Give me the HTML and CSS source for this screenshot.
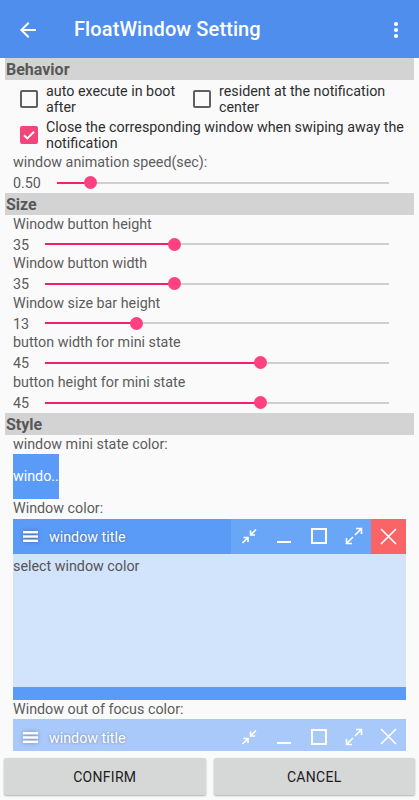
FILE: index.html
```html
<!DOCTYPE html>
<html lang="en">
<head>
<meta charset="utf-8">
<title>FloatWindow Setting</title>
<link rel="stylesheet" href="styles.css">
</head>
<body>
<div class="app">
  <header class="appbar">
    <svg class="back" viewBox="0 0 24 24" width="24" height="24"><path d="M20 11H7.83l5.59-5.59L12 4l-8 8 8 8 1.41-1.41L7.83 13H20v-2z" fill="#fff"/></svg>
    <h1 class="title">FloatWindow Setting</h1>
    <svg class="kebab" viewBox="0 0 6 18" width="6" height="18"><circle cx="3" cy="3" r="2.1" fill="#fff"/><circle cx="3" cy="9" r="2.1" fill="#fff"/><circle cx="3" cy="15" r="2.1" fill="#fff"/></svg>
  </header>

  <main class="content">
    <div class="section-head">Behavior</div>
    <div class="checks">
      <div class="check-pair">
        <div class="check"><span class="box"></span><span class="check-text">auto execute in boot after</span></div>
        <div class="check"><span class="box"></span><span class="check-text">resident at the notification center</span></div>
      </div>
      <div class="check">
        <span class="box checked"><svg viewBox="0 0 18 18" width="18" height="18"><path d="M4 9.2l3.3 3.2L14 5.8" fill="none" stroke="#fff" stroke-width="2"/></svg></span>
        <span class="check-text">Close the corresponding window when swiping away the notification</span>
      </div>
    </div>
    <div class="setting">
      <div class="label">window animation speed(sec):</div>
      <div class="slider-row">
        <span class="value">0.50</span>
        <div class="seek"><div class="track"><div class="fill" style="width:10%"></div><span class="thumb" style="left:10%"></span></div></div>
      </div>
    </div>

    <div class="section-head">Size</div>
    <div class="setting">
      <div class="label">Winodw button height</div>
      <div class="slider-row">
        <span class="value">35</span>
        <div class="seek"><div class="track"><div class="fill" style="width:37.6%"></div><span class="thumb" style="left:37.6%"></span></div></div>
      </div>
    </div>
    <div class="setting">
      <div class="label">Window button width</div>
      <div class="slider-row">
        <span class="value">35</span>
        <div class="seek"><div class="track"><div class="fill" style="width:37.6%"></div><span class="thumb" style="left:37.6%"></span></div></div>
      </div>
    </div>
    <div class="setting">
      <div class="label">Window size bar height</div>
      <div class="slider-row">
        <span class="value">13</span>
        <div class="seek"><div class="track"><div class="fill" style="width:26.5%"></div><span class="thumb" style="left:26.5%"></span></div></div>
      </div>
    </div>
    <div class="setting">
      <div class="label">button width for mini state</div>
      <div class="slider-row">
        <span class="value">45</span>
        <div class="seek"><div class="track"><div class="fill" style="width:62.7%"></div><span class="thumb" style="left:62.7%"></span></div></div>
      </div>
    </div>
    <div class="setting">
      <div class="label">button height for mini state</div>
      <div class="slider-row">
        <span class="value">45</span>
        <div class="seek"><div class="track"><div class="fill" style="width:62.7%"></div><span class="thumb" style="left:62.7%"></span></div></div>
      </div>
    </div>

    <div class="section-head">Style</div>
    <div class="setting">
      <div class="label">window mini state color:</div>
      <div class="mini-box">windo..</div>
      <div class="label">Window color:</div>
      <div class="win">
        <div class="win-bar">
          <div class="win-head">
            <svg class="menu" viewBox="0 0 15 11" width="15" height="11"><rect x="0" y="0" width="15" height="2.4" fill="#fff"/><rect x="0" y="4.3" width="15" height="2.4" fill="#fff"/><rect x="0" y="8.6" width="15" height="2.4" fill="#fff"/></svg>
            <span class="win-title">window title</span>
          </div>
          <div class="win-btns">
            <span class="wbtn"><svg viewBox="0 0 16 16" width="16" height="16" fill="none" stroke="#fff" stroke-width="1.6"><path d="M9.5 2.5v4.5h4.5M9.5 7l5.5-5.5M2.5 9.5h4.5v4.5M7 9.5L1.5 15"/></svg></span>
            <span class="wbtn"><svg viewBox="0 0 16 16" width="16" height="16" fill="none" stroke="#fff" stroke-width="2"><path d="M1 14h14"/></svg></span>
            <span class="wbtn"><svg viewBox="0 0 16 16" width="16" height="16" fill="none" stroke="#fff" stroke-width="2"><rect x="1" y="1" width="14" height="14"/></svg></span>
            <span class="wbtn"><svg viewBox="0 0 18 18" width="18" height="18" fill="none" stroke="#fff" stroke-width="1.6"><path d="M11 1.5h5.5V7M16.5 1.5L10 8M1.5 11v5.5H7M1.5 16.5L8 10"/></svg></span>
            <span class="wbtn close"><svg viewBox="0 0 17 17" width="17" height="17" fill="none" stroke="#fff" stroke-width="1.6"><path d="M1 1l15 15M16 1L1 16"/></svg></span>
          </div>
        </div>
        <div class="win-body">select window color</div>
        <div class="win-foot"></div>
      </div>
      <div class="label">Window out of focus color:</div>
      <div class="win inactive">
        <div class="win-bar">
          <div class="win-head">
            <svg class="menu" viewBox="0 0 15 11" width="15" height="11"><rect x="0" y="0" width="15" height="2.4" fill="#fff"/><rect x="0" y="4.3" width="15" height="2.4" fill="#fff"/><rect x="0" y="8.6" width="15" height="2.4" fill="#fff"/></svg>
            <span class="win-title">window title</span>
          </div>
          <div class="win-btns">
            <span class="wbtn"><svg viewBox="0 0 16 16" width="16" height="16" fill="none" stroke="#fff" stroke-width="1.6"><path d="M9.5 2.5v4.5h4.5M9.5 7l5.5-5.5M2.5 9.5h4.5v4.5M7 9.5L1.5 15"/></svg></span>
            <span class="wbtn"><svg viewBox="0 0 16 16" width="16" height="16" fill="none" stroke="#fff" stroke-width="2"><path d="M1 14h14"/></svg></span>
            <span class="wbtn"><svg viewBox="0 0 16 16" width="16" height="16" fill="none" stroke="#fff" stroke-width="2"><rect x="1" y="1" width="14" height="14"/></svg></span>
            <span class="wbtn"><svg viewBox="0 0 18 18" width="18" height="18" fill="none" stroke="#fff" stroke-width="1.6"><path d="M11 1.5h5.5V7M16.5 1.5L10 8M1.5 11v5.5H7M1.5 16.5L8 10"/></svg></span>
            <span class="wbtn close"><svg viewBox="0 0 17 17" width="17" height="17" fill="none" stroke="#fff" stroke-width="1.6"><path d="M1 1l15 15M16 1L1 16"/></svg></span>
          </div>
        </div>
      </div>
    </div>
  </main>

  <footer class="actions">
    <div class="btn">CONFIRM</div>
    <div class="btn">CANCEL</div>
  </footer>
</div>
</body>
</html>
```

FILE: styles.css
```css
* { box-sizing: border-box; }
html, body { margin: 0; padding: 0; }
body {
  background: #fafafa;
  font-family: Roboto, "Noto Sans", "Liberation Sans", sans-serif;
  color: #333;
}
.app {
  width: 419px;
  height: 800px;
  display: flex;
  flex-direction: column;
  overflow: hidden;
}
.appbar {
  height: 58px;
  flex: none;
  background: #4f8eec;
  display: flex;
  align-items: center;
  padding: 0 0 0 16px;
}
.back { flex: none; margin-top: 1px; }
.title {
  margin: 0 0 0 34px;
  flex: 1;
  font-size: 20px;
  font-weight: 500;
  color: #fff;
  letter-spacing: 0.1px;
}
.kebab { flex: none; margin-right: 20px; margin-top: 1px; }

.content {
  flex: 1;
  overflow: hidden;
  padding: 0 5px;
}
.section-head {
  height: 22px;
  line-height: 24px;
  background: #d3d3d3;
  color: #585858;
  font-weight: 700;
  font-size: 16px;
  padding-left: 1px;
}
.checks {
  padding: 1px 0 0 15px;
}
.check-pair {
  display: grid;
  grid-template-columns: 173px 1fr;
}
.check {
  height: 36px;
  display: flex;
  align-items: center;
  gap: 8px;
}
.box {
  flex: none;
  width: 18px;
  height: 18px;
  border: 2px solid #5f5f5f;
  border-radius: 2px;
}
.box.checked {
  border: none;
  background: #f2457c;
  display: flex;
}
.check-text {
  font-size: 14.3px;
  line-height: 16.3px;
  color: #2e2e2e;
}
.setting {
  padding: 0 8px;
}
.label {
  font-size: 14.3px;
  line-height: 19.6px;
  height: 19.6px;
  color: #5c5c5c;
  white-space: nowrap;
}
.slider-row {
  height: 20px;
  display: flex;
  align-items: center;
}
.value {
  font-size: 14.3px;
  line-height: 20px;
  color: #5c5c5c;
  padding-top: 1px;
}
.seek {
  flex: 1;
  padding: 0 17px 0 16px;
}
.track {
  position: relative;
  height: 2px;
  background: #cfcfcf;
}
.fill {
  height: 2px;
  background: #f5206c;
}
.thumb {
  position: absolute;
  top: 50%;
  width: 13px;
  height: 13px;
  margin: -6.5px 0 0 -6.5px;
  border-radius: 50%;
  background: #ff4081;
}
.mini-box {
  width: 46px;
  height: 45px;
  background: #5b9bf8;
  color: #fff;
  font-size: 14.3px;
  line-height: 45px;
  white-space: nowrap;
  overflow: hidden;
}
.win-bar {
  height: 35px;
  display: flex;
  background: #5b9bf8;
}
.win-head {
  flex: 1;
  display: flex;
  align-items: center;
  padding-left: 10px;
  gap: 11px;
}
.menu { filter: drop-shadow(0 0 2px rgba(0,0,0,0.3)); margin-top: 1px; }
.win-title {
  color: #fff;
  font-size: 14.3px;
  line-height: 20px;
  padding-top: 2px;
  text-shadow: 0 0 3px rgba(0,0,0,0.35);
}
.win-btns {
  display: flex;
  background: #6aa6f8;
}
.wbtn {
  width: 35px;
  height: 35px;
  display: flex;
  align-items: center;
  justify-content: center;
}
.wbtn.close { background: #f96466; }
.win-body {
  height: 133px;
  background: #d2e3fc;
  color: #555;
  font-size: 14.3px;
  line-height: 20px;
  padding-top: 2px;
}
.win-foot {
  height: 13px;
  background: #5b9bf8;
}
.win.inactive { height: 60px; }
.win.inactive .win-bar,
.win.inactive .win-btns,
.win.inactive .wbtn.close { background: #a9c9fa; }

.actions {
  height: 49px;
  flex: none;
  display: flex;
  gap: 8px;
  padding: 7px 4px 5px;
  background: #fafafa;
}
.btn {
  flex: 1;
  height: 37px;
  border-radius: 2px;
  background: #d6d7d7;
  box-shadow: 0 1px 2px rgba(0,0,0,0.3);
  display: flex;
  align-items: center;
  justify-content: center;
  font-size: 14px;
  font-weight: 400;
  color: #1c1c1c;
  letter-spacing: 0.3px;
}
```
